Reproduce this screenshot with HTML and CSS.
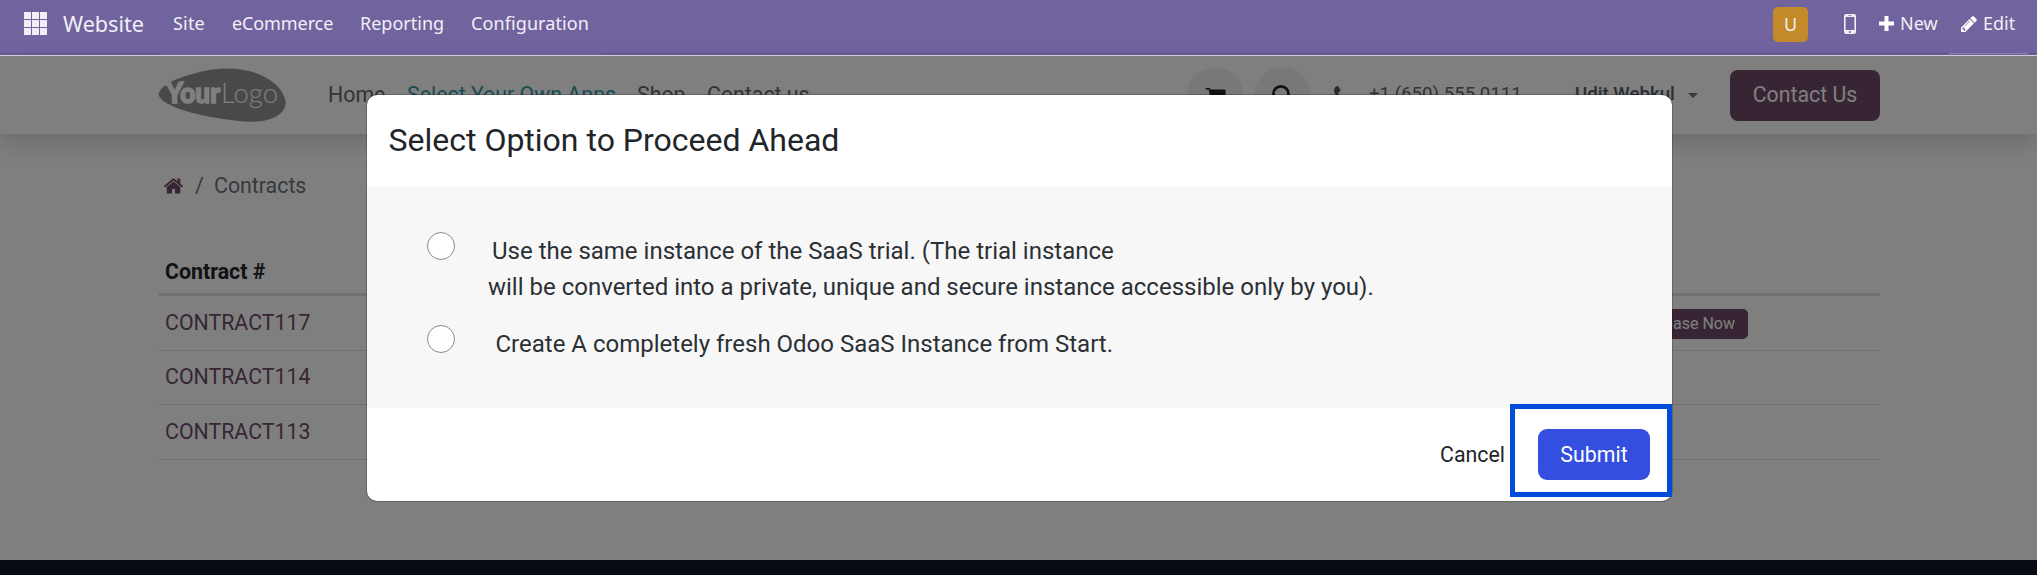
FILE: index.html
```html
<!DOCTYPE html>
<html lang="en">
<head>
<meta charset="utf-8">
<title>Contracts</title>
<link rel="stylesheet" href="styles.css">
</head>
<body>
<header class="topbar">
  <svg class="apps" viewBox="0 0 23 23"><path d="M0 0h7v7H0zM8 0h7v7H8zM16 0h7v7h-7zM0 8h7v7H0zM8 8h7v7H8zM16 8h7v7h-7zM0 16h7v7H0zM8 16h7v7H8zM16 16h7v7h-7z"/></svg>
  <span class="brand">Website</span>
  <nav class="menu">
    <span class="m-site">Site</span>
    <span class="m-shop">eCommerce</span>
    <span class="m-rep">Reporting</span>
    <span class="m-conf">Configuration</span>
  </nav>
  <div class="systray">
    <span class="avatar">U</span>
    <svg class="mobile" viewBox="0 0 12 20"><path fill-rule="evenodd" d="M2 0h8a2 2 0 0 1 2 2v16a2 2 0 0 1-2 2H2a2 2 0 0 1-2-2V2a2 2 0 0 1 2-2zM1.600 3v13h8.800V3zM4.500 1v.8h3V1zM6 17a1 1 0 1 0 0 2 1 1 0 0 0 0-2z"/></svg>
    <svg class="plus" viewBox="0 0 15 15"><path d="M5.500 0h4v5.500H15v4H9.500V15h-4V9.500H0v-4h5.500z"/></svg>
    <span class="new">New</span>
    <svg class="pencil" viewBox="0 0 1536 1536"><path d="M363 1408l91-91-235-235-91 91v107h128v128h107zm523-928q0-22-22-22-10 0-17 7l-542 542q-7 7-7 17 0 22 22 22 10 0 17-7l542-542q7-7 7-17zm-54-192l416 416-832 832H0v-416zm683 96q0 53-37 90l-166 166-416-416 166-165q36-38 90-38 53 0 91 38l235 234q37 39 37 91z"/></svg>
    <span class="edit">Edit</span>
  </div>
</header>

<div class="page">
  <div class="site-header">
    <svg class="logo" viewBox="0 0 128 54">
      <path class="logo-shape" d="M0.800 25.500C3 16 22 8 50 2.200C92-5 124 12 127.700 34C128 47 112 54.500 91 53.700C48 51-1 38 .8 25.500z"/>
      <path class="logo-cut" d="M4 14.500l6-.5 4 8z"/>
      <text class="logo-bold" x="8" y="34.500" textLength="54" lengthAdjust="spacingAndGlyphs">Your</text>
      <text class="logo-thin" x="63" y="34.500" textLength="57" lengthAdjust="spacingAndGlyphs">Logo</text>
    </svg>
    <nav class="links">
      <span class="l-home">Home</span>
      <span class="l-apps">Select Your Own Apps</span>
      <span class="l-shop">Shop</span>
      <span>Contact us</span>
    </nav>
    <div class="tools">
      <span class="round"><svg class="cart" viewBox="0 0 1664 1408"><path d="M640 1280q0 52-38 90t-90 38-90-38-38-90 38-90 90-38 90 38 38 90zm896 0q0 52-38 90t-90 38-90-38-38-90 38-90 90-38 90 38 38 90zm128-1088v512q0 24-16 42t-41 21L563 889q13 60 13 71 0 16-24 64h920q26 0 45 19t19 45-19 45-45 19H448q-26 0-45-19t-19-45q0-11 8-31t16-36 21-40 15-29L267 128H64q-26 0-45-19T0 64t19-45T64 0h256q16 0 28 6t20 16 13 24 8 26 5 29 4 27h1202q26 0 45 19t19 45z"/></svg></span>
      <span class="round"><svg class="search" viewBox="0 0 20 20"><circle cx="8.500" cy="8.500" r="7.200"/><path d="M13.500 13.500l5 5"/></svg></span>
      <svg class="phone" viewBox="0 0 1408 1408"><path d="M1408 1112q0 27-10 70t-21 69q-21 50-122 106-94 51-186 51-27 0-53-3t-57-13-47-15-55-21-49-18q-98-35-175-83-127-79-264-215T154 776q-48-77-83-175-3-9-18-49T32 497t-15-47T4 393t-4-53q0-92 51-186Q107 53 157 32q26-11 69-21t70-11q14 0 21 3 18 6 53 76 11 19 30 54t35 64 31 53q3 4 18 25t22 36 7 28q0 20-29 50t-62 55-62 53-29 46q0 9 5 23t8 20 14 24 12 19q76 137 174 235t235 174q2 1 19 12t24 14 20 8 23 5q18 0 46-29t53-62 55-62 50-29q14 0 28 7t36 22 25 18q25 15 53 31t64 35 54 30q70 35 76 53 3 7 3 21z"/></svg>
      <span class="number">+1 (650) 555 0111</span>
      <span class="user">Udit Webkul</span>
      <span class="caret"></span>
      <span class="contact">Contact Us</span>
    </div>
  </div>

  <main class="content">
    <div class="crumbs">
      <svg class="home" viewBox="0 0 1612 1283"><path d="M1382 739v480q0 26-19 45t-45 19H934V899H678v384H294q-26 0-45-19t-19-45V739q0-1 .5-3t.5-3l575-474 575 474q1 2 1 6zm223-69l-62 74q-8 9-21 11h-3q-13 0-21-7L806 171 114 748q-12 8-24 7-13-2-21-11L7 670q-8-10-7-23.500T11 625L730 26q32-26 76-26t76 26l244 204V35q0-14 9-23t23-9h192q14 0 23 9t9 23v408l219 182q10 8 11 21.500t-7 23.500z"/></svg>
      <span class="slash">/</span>
      <span>Contracts</span>
    </div>
    <div class="table">
      <div class="thead">Contract #</div>
      <div class="row"><span>CONTRACT117</span><span class="purchase">Purchase Now</span></div>
      <div class="row"><span>CONTRACT114</span></div>
      <div class="row"><span>CONTRACT113</span></div>
    </div>
  </main>
  <footer class="footer"></footer>

  <div class="backdrop"></div>
  <section class="modal">
    <h1 class="modal-title">Select Option to Proceed Ahead</h1>
    <div class="modal-body">
      <div class="option first">
        <span class="radio"></span>
        <p class="opt-text"><span class="indent">Use the same instance of the SaaS trial. (The trial instance</span><br>will be converted into a private, unique and secure instance accessible only by you).</p>
      </div>
      <div class="option">
        <span class="radio"></span>
        <p class="opt-text fresh">Create A completely fresh Odoo SaaS Instance from Start.</p>
      </div>
    </div>
    <div class="modal-footer">
      <span class="cancel">Cancel</span>
      <span class="highlight"><button class="submit">Submit</button></span>
    </div>
  </section>
</div>
</body>
</html>
```

FILE: styles.css
```css
* { box-sizing: border-box; }
body {
  margin: 0;
  width: 2037px;
  height: 575px;
  overflow: hidden;
  background: #fff;
  font-family: Roboto, "Liberation Sans", sans-serif;
  font-size: 21.33px;
  white-space: nowrap;
}
svg { display: block; flex: none; }

/* Top bar */
.topbar {
  height: 56px;
  padding: 0 20px 10px 24px;
  display: flex;
  align-items: center;
  background:
    linear-gradient(#d5d0de, #d5d0de) 0 55px / 100% 1px no-repeat,
    linear-gradient(90deg, #615389 160px, #71639e 160px 601px, #615389 601px 1949px, #8f84b4 1949px 2028px, #615389 2028px) 0 53px / 100% 1px no-repeat,
    #71639e;
  color: #f1eff5;
  font-family: "Noto Sans", "Open Sans", sans-serif;
  font-size: 18px;
}
.apps { width: 23px; height: 23px; fill: #f1eff5; margin-right: 16px; }
.brand { width: 110px; font-size: 21.600px; }
.menu { display: flex; }
.m-site { width: 59px; letter-spacing: .2px; }
.m-shop { width: 128px; letter-spacing: -.1px; }
.m-rep { width: 111px; }
.m-conf { letter-spacing: .1px; }
.systray { margin-left: auto; display: flex; align-items: center; }
.avatar {
  width: 35px;
  height: 35px;
  margin: 2px 36px 0 0;
  border-radius: 5px;
  background: #c28a28;
  text-align: center;
  line-height: 34px;
}
.mobile { width: 12px; height: 20px; fill: #f1eff5; margin: 2px 23px 0 0; }
.plus { width: 15px; height: 15px; fill: #fff; margin-right: 6px; }
.new { width: 61px; }
.pencil { width: 16px; height: 16px; fill: #fff; margin: 2px 6px 0 0; }
.edit { width: 34px; }

/* Site header */
.page { position: relative; height: 519px; display: flex; flex-direction: column; }
.site-header {
  height: 78px;
  flex: none;
  padding: 0 157px 0 158px;
  display: flex;
  align-items: center;
  background: #fff;
  box-shadow: 0 10.700px 21.300px rgba(0, 0, 0, .15);
  color: #666;
}
.logo { width: 128px; height: 54px; }
.logo-shape { fill: #929292; }
.logo-cut { fill: #fff; }
.logo-bold, .logo-thin { font-family: Lato, sans-serif; font-size: 28px; fill: #fff; }
.logo-bold { font-weight: 900; stroke: #fff; stroke-width: 1.500px; }
.logo-thin { font-weight: 300; }
.links { display: flex; margin-left: 42px; padding-bottom: 2px; }
.l-home { width: 79px; }
.l-apps { width: 230px; color: #3498a6; }
.l-shop { width: 70px; }
.tools { margin-left: auto; display: flex; align-items: center; }
.round {
  width: 56px;
  height: 56px;
  margin-right: 11px;
  border-radius: 50%;
  background: #f0f0f0;
  display: flex;
  align-items: center;
  justify-content: center;
}
.cart { width: 21px; height: 17px; fill: #222; margin-top: 3px; }
.search { width: 21px; height: 21px; fill: none; stroke: #222; stroke-width: 2.600; }
.phone { width: 18px; height: 18px; fill: #555; margin: 0 17px 0 13px; }
.number { width: 206px; padding-bottom: 3px; font-size: 18.670px; }
.user { width: 113px; padding-bottom: 3px; font-size: 18.670px; font-weight: 500; color: #555f68; }
.caret {
  width: 10px;
  margin-right: 32px;
  border: 5.500px solid transparent;
  border-top-color: #6c757d;
  border-bottom: 0;
}
.contact {
  width: 150px;
  height: 51px;
  border-radius: 8px;
  background: #714b67;
  color: #fff;
  text-align: center;
  line-height: 50px;
}

/* Contract list */
.content { height: 426px; padding: 39px 157px 0 159px; color: #212529; }
.crumbs { height: 25px; display: flex; align-items: center; padding-left: 5px; color: #6c757d; }
.home { width: 19px; height: 16px; fill: #714b67; margin-right: 12px; }
.slash { width: 19px; }
.thead { height: 98px; padding: 61px 6px 0; border-bottom: 3px solid #dee2e6; font-weight: 700; line-height: 25px; }
.row {
  height: 54.670px;
  display: flex;
  align-items: center;
  padding: 0 132px 1px 6px;
  border-bottom: 1.500px solid #dee2e6;
  color: #714b67;
}
.purchase {
  margin: 3px 0 0 auto;
  height: 30px;
  padding: 0 13px;
  border-radius: 5px;
  background: #714b67;
  color: #fff;
  font-size: 16px;
  line-height: 29px;
}
.footer { height: 15px; background: #0e1624; }

/* Dialog over the page */
.backdrop { position: absolute; inset: 0; background: rgba(0, 0, 0, .5); }
.modal {
  position: absolute;
  left: 366px;
  top: 38px;
  width: 1307px;
  height: 408px;
  border: 1px solid rgba(0, 0, 0, .2);
  border-radius: 11px;
  background: #fff;
  background-clip: padding-box;
  color: #2b3035;
}
.modal-title { height: 91px; margin: 0; padding: 0 21.500px; font-size: 32px; font-weight: 400; line-height: 90px; color: #212529; }
.modal-body { height: 222px; padding: 46px 60px 0; background: #f7f7f7; font-size: 24px; line-height: 36px; }
.option { display: flex; height: 93px; }
.radio { flex: none; width: 28px; height: 28px; border: 1.500px solid #8b8b8b; border-radius: 50%; background: #fff; }
.opt-text { margin: .5px 0 0 33px; }
.indent { padding-left: 4px; }
.fresh { margin: 1px 0 0 40.500px; }
.modal-footer { height: 93px; display: flex; justify-content: flex-end; color: #212529; }
.cancel { line-height: 93px; width: 70px; }
.highlight {
  width: 162px;
  height: 93px;
  margin-top: -4px;
  padding: 20px 0 0 23px;
  border: 5px solid #034bdc;
}
.submit {
  width: 112px;
  height: 51px;
  padding: 0;
  border: 0;
  border-radius: 9px;
  background: #344fe0;
  color: #fff;
  font: inherit;
}
```
